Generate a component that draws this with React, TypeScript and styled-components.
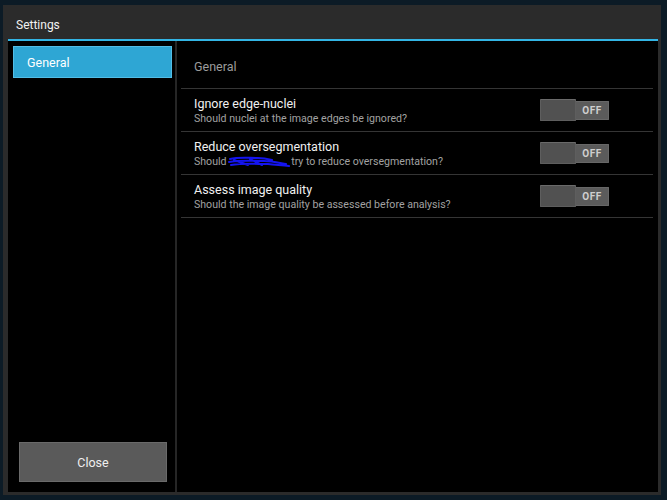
import React from "react";
import styled, { createGlobalStyle } from "styled-components";

const Global = createGlobalStyle`
  html, body { margin: 0; padding: 0; background: #0c1b26; }
  body { font-family: Roboto, "Noto Sans", "Liberation Sans", sans-serif; -webkit-font-smoothing: antialiased; }
  * { box-sizing: border-box; }
`;

const Window = styled.div`
  margin: 5px 0 0 3px;
  width: 658px;
  height: 490px;
  background: #2b2b2b;
  display: flex;
  flex-direction: column;
`;

const TitleBar = styled.div`
  height: 34px;
  padding: 5px 0 0 13px;
  display: flex;
  align-items: center;
  color: #f2f2f2;
  font-size: 12px;
`;

const Body = styled.div`
  flex: 1;
  margin: 0 3px 3px 5px;
  border-top: 2px solid #33b5e5;
  background: #000;
  display: flex;
  min-height: 0;
`;

const Sidebar = styled.div`
  width: 169px;
  border-right: 2px solid #262626;
  display: flex;
  flex-direction: column;
  justify-content: space-between;
  padding: 5px 3px 10px 5px;
`;

const NavItem = styled.div<{ $active?: boolean }>`
  height: 32px;
  display: flex;
  align-items: center;
  padding-left: 13px;
  color: #fff;
  font-size: 12.5px;
  background: ${(p) => (p.$active ? "#2ea6d4" : "transparent")};
  border: 1px solid ${(p) => (p.$active ? "#52bde6" : "transparent")};
`;

const CloseButton = styled.button`
  margin: 0 5px 0 6px;
  height: 40px;
  background: #5a5a5a;
  border: 1px solid #6a6a6a;
  color: #f0f0f0;
  font-family: inherit;
  font-size: 12.5px;
  padding: 0;
`;

const Content = styled.div`
  flex: 1;
  display: flex;
  flex-direction: column;
`;

const Header = styled.div`
  height: 48px;
  margin: 0 5px 0 4px;
  padding: 4px 0 0 13px;
  display: flex;
  align-items: center;
  color: #9c9c9c;
  font-size: 12.5px;
  border-bottom: 1px solid #353535;
`;

const Row = styled.div`
  height: 43px;
  margin: 0 5px 0 4px;
  padding: 0 44px 0 13px;
  display: flex;
  align-items: center;
  justify-content: space-between;
  border-bottom: 1px solid #353535;
`;

const TextBlock = styled.div`
  display: flex;
  flex-direction: column;
  padding-top: 2px;
`;

const Title = styled.div`
  color: #f0f0f0;
  font-size: 12.5px;
  line-height: 15px;
`;

const Subtitle = styled.div`
  color: #a2a2a2;
  font-size: 10.6px;
  line-height: 15px;
  display: flex;
  align-items: center;
  white-space: pre;
`;

const Toggle = styled.div`
  display: flex;
  align-items: center;
`;

const Thumb = styled.div`
  width: 36px;
  height: 22px;
  background: #515151;
  border: 1px solid #5e5e5e;
  border-top-color: #6a6a6a;
  border-radius: 1px;
`;

const Track = styled.div`
  width: 33px;
  height: 19px;
  background: #5b5b5b;
  border: 1px solid #676767;
  border-left: none;
  border-radius: 0 1px 1px 0;
  display: flex;
  align-items: center;
  justify-content: center;
  color: #cfcfcf;
  font-size: 10px;
  font-weight: 700;
  letter-spacing: 0.6px;
`;

const Scribble = () => (
  <svg width="62" height="12" viewBox="0 0 62 12" style={{ margin: "0 1px 0 -1px" }}>
    <path
      d="M2 3 C10 1, 20 2, 30 2 C36 2, 40 3, 44 4 M1 6 C12 4, 24 5, 36 5 C44 5, 52 7, 58 8 M3 9 C14 7, 28 8, 40 8 C48 9, 54 9, 61 10 M6 4 L20 9 M22 3 L34 9"
      stroke="#1414f0"
      strokeWidth="2"
      fill="none"
      strokeLinecap="round"
    />
  </svg>
);

const settings = [
  { title: "Ignore edge-nuclei", sub: <>Should nuclei at the image edges be ignored?</> },
  {
    title: "Reduce oversegmentation",
    sub: (
      <>
        Should <Scribble />try to reduce oversegmentation?
      </>
    ),
  },
  { title: "Assess image quality", sub: <>Should the image quality be assessed before analysis?</> },
];

export default function App() {
  return (
    <>
      <Global />
      <Window>
        <TitleBar>Settings</TitleBar>
        <Body>
          <Sidebar>
            <NavItem $active>General</NavItem>
            <CloseButton>Close</CloseButton>
          </Sidebar>
          <Content>
            <Header>General</Header>
            {settings.map((s) => (
              <Row key={s.title}>
                <TextBlock>
                  <Title>{s.title}</Title>
                  <Subtitle>{s.sub}</Subtitle>
                </TextBlock>
                <Toggle>
                  <Thumb />
                  <Track>OFF</Track>
                </Toggle>
              </Row>
            ))}
          </Content>
        </Body>
      </Window>
    </>
  );
}
